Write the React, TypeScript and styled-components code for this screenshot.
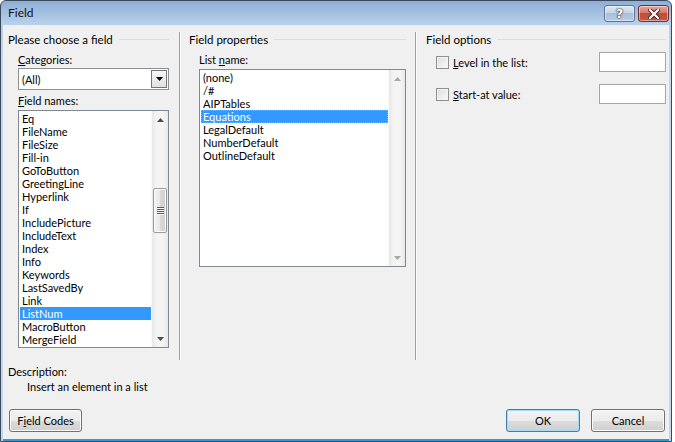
import React from "react";
import styled, { createGlobalStyle } from "styled-components";

const GlobalStyle = createGlobalStyle`
  html, body { margin: 0; padding: 0; background: #fff; }
  body {
    font-family: Lato, "Liberation Sans", sans-serif;
    font-size: 11px;
    color: #000;
  }
  * { box-sizing: border-box; }
`;

const Window = styled.div`
  width: 672px;
  height: 442px;
  display: flex;
  flex-direction: column;
  border: 1px solid #3a4a5c;
  border-radius: 6px 6px 0 0;
  background: linear-gradient(#8eaed6 0px, #b6cfea 22px, #c2d7ee 60px, #c2d7ee);
  overflow: hidden;
`;

const TitleBar = styled.div`
  height: 24px;
  display: flex;
  align-items: flex-start;
  justify-content: space-between;
  padding: 0 2px 0 7px;
`;

const Title = styled.div`
  line-height: 24px;
  font-size: 12px;
  color: #111;
`;

const CaptionButtons = styled.div`
  display: flex;
  gap: 3px;
  margin-top: 4px;
`;

const CaptionButton = styled.div<{ $close?: boolean }>`
  width: 31px;
  height: 17px;
  display: flex;
  align-items: center;
  justify-content: center;
  border: 1px solid ${(p) => (p.$close ? "#7a2f2c" : "#5d7592")};
  border-radius: 3px;
  background: ${(p) =>
    p.$close
      ? "linear-gradient(#e8a596 0%, #d7796a 45%, #c14d3c 50%, #c6573f 100%)"
      : "linear-gradient(#dde9f5 0%, #c5d6ea 45%, #a9bfda 50%, #b7cde6 100%)"};
  box-shadow: inset 0 0 0 1px rgba(255, 255, 255, 0.45);
  color: #fff;
  font-family: "DejaVu Sans", sans-serif;
  font-weight: bold;
  font-size: 13px;
  line-height: 1;
  text-shadow: 0 0 1px #24364f, 0 0 1px #24364f, 0 0 2px #24364f;
`;

const Body = styled.div`
  flex: 1;
  margin: 0 2px;
  background: #f0f0f0;
  display: flex;
  flex-direction: column;
  border-bottom: 2px solid #3998cf;
`;

const Columns = styled.div`
  display: flex;
  margin-top: 7px;
  height: 328px;
`;

const Column = styled.div<{ $w?: number; $pl: number; $pr: number; $sep?: boolean }>`
  ${(p) => (p.$w ? `width: ${p.$w}px;` : "flex: 1;")}
  padding: 0 ${(p) => p.$pr}px 0 ${(p) => p.$pl}px;
  ${(p) => (p.$sep ? "border-left: 1px solid #a0a0a0;" : "")}
  ${(p) => (p.$sep ? "box-shadow: inset 1px 0 0 #fbfbfb;" : "")}
  display: flex;
  flex-direction: column;
`;

const GroupHeader = styled.div`
  display: flex;
  align-items: center;
  line-height: 15px;
  height: 15px;
  font-size: 11.5px;
  &::after {
    content: "";
    flex: 1;
    height: 1px;
    margin-left: 6px;
    background: #d5dfe5;
  }
`;

const Indent = styled.div<{ $top: number }>`
  margin-left: 10px;
  margin-top: ${(p) => p.$top}px;
  display: flex;
  flex-direction: column;
`;

const Label = styled.div<{ $mt?: number }>`
  line-height: 15px;
  margin-top: ${(p) => p.$mt ?? 0}px;
  margin-bottom: 1px;
`;

const Combo = styled.div`
  height: 22px;
  border: 1px solid #8c8f94;
  background: #fff;
  display: flex;
  align-items: center;
  justify-content: space-between;
  padding: 1px 1px 1px 3px;
`;

const ComboButton = styled.div`
  width: 16px;
  height: 18px;
  border: 1px solid #777;
  background: linear-gradient(#f6f6f6, #e2e2e2);
  display: flex;
  align-items: center;
  justify-content: center;
`;

const ListBox = styled.div<{ $h: number }>`
  height: ${(p) => p.$h}px;
  margin-top: 1px;
  border: 1px solid #828790;
  background: #fff;
  display: flex;
  overflow: hidden;
`;

const Items = styled.div`
  flex: 1;
  padding: 1px 0 0 1px;
`;

const Item = styled.div<{ $sel?: boolean; $focus?: boolean }>`
  height: 13px;
  line-height: 13px;
  padding-left: 2px;
  white-space: nowrap;
  background: ${(p) => (p.$sel ? "#3399ff" : "transparent")};
  color: ${(p) => (p.$sel ? "#fff" : "#000")};
  ${(p) => (p.$focus ? "outline: 1px dotted #e0a040; outline-offset: -1px;" : "")}
`;

const ScrollBar = styled.div`
  width: 17px;
  display: flex;
  flex-direction: column;
  justify-content: space-between;
  background: linear-gradient(90deg, #e8e8e8, #f4f4f4 30%, #f4f4f4 70%, #e8e8e8);
  border-left: 1px solid #f8f8f8;
`;

const Arrow = styled.div`
  height: 17px;
  display: flex;
  align-items: center;
  justify-content: center;
`;

const Thumb = styled.div<{ $top: number }>`
  position: relative;
  margin: 0 1px;
  height: 45px;
  top: ${(p) => p.$top}px;
  border: 1px solid #9a9a9a;
  border-radius: 2px;
  background: linear-gradient(90deg, #f3f3f3, #e8e8e8 50%, #d9d9d9 51%, #cfcfcf);
  box-shadow: inset 0 0 0 1px #fafafa;
  display: flex;
  flex-direction: column;
  align-items: center;
  justify-content: center;
  gap: 1px;
`;

const Grip = styled.div`
  width: 7px;
  height: 1px;
  background: #5a5a5a;
  box-shadow: 0 1px 0 #f8f8f8;
`;

const Track = styled.div`
  flex: 1;
`;

const OptionRow = styled.div<{ $mt: number }>`
  display: flex;
  align-items: center;
  height: 20px;
  margin-top: ${(p) => p.$mt}px;
`;

const CheckBox = styled.div`
  width: 13px;
  height: 13px;
  border: 1px solid #8e8f8f;
  background: linear-gradient(135deg, #dcdcdc, #fbfbfb);
  box-shadow: inset 0 0 0 1px #f4f4f4;
  margin-right: 4px;
`;

const OptionText = styled.div`
  flex: 1;
`;

const TextBox = styled.div`
  width: 67px;
  height: 20px;
  border: 1px solid #a6a6a6;
  background: #fff;
`;

const Description = styled.div`
  margin-top: 4px;
  padding-left: 5px;
  line-height: 15px;
`;

const DescriptionText = styled.div`
  padding-left: 19px;
`;

const Footer = styled.div`
  display: flex;
  align-items: center;
  margin-top: 15px;
  padding: 0 4px 0 6px;
`;

const Button = styled.div<{ $default?: boolean; $w: number }>`
  width: ${(p) => p.$w}px;
  height: 23px;
  border: 1px solid ${(p) => (p.$default ? "#3c7fb1" : "#707070")};
  border-radius: 3px;
  background: linear-gradient(#f2f2f2 0%, #ebebeb 50%, #dddddd 51%, #cfcfcf 100%);
  box-shadow: inset 0 0 0 1px ${(p) => (p.$default ? "#9fdcf8" : "#fbfbfb")};
  display: flex;
  align-items: center;
  justify-content: center;
  & + & {
    margin-left: 11px;
  }
`;

const Spacer = styled.div`
  flex: 1;
`;

const U = styled.span`
  text-decoration: underline;
  text-underline-offset: 1px;
`;

const Tri = ({ up, color = "#4d4d4d" }: { up?: boolean; color?: string }) => (
  <svg width="7" height="4" viewBox="0 0 7 4">
    <path d={up ? "M3.5 0 L7 4 L0 4 Z" : "M0 0 L7 0 L3.5 4 Z"} fill={color} />
  </svg>
);

const fieldNames = [
  "Eq", "FileName", "FileSize", "Fill-in", "GoToButton", "GreetingLine", "Hyperlink", "If",
  "IncludePicture", "IncludeText", "Index", "Info", "Keywords", "LastSavedBy", "Link",
  "ListNum", "MacroButton", "MergeField",
];

const listNames = ["(none)", "/#", "AIPTables", "Equations", "LegalDefault", "NumberDefault", "OutlineDefault"];

export default function App() {
  return (
    <>
      <GlobalStyle />
      <Window>
        <TitleBar>
          <Title>Field</Title>
          <CaptionButtons>
            <CaptionButton>?</CaptionButton>
            <CaptionButton $close>
              <svg width="12" height="10" viewBox="0 0 12 10">
                <path d="M2 1 L10 9 M10 1 L2 9" stroke="#3b1b18" strokeWidth="4" strokeLinecap="square" />
                <path d="M2 1 L10 9 M10 1 L2 9" stroke="#fff" strokeWidth="2.2" strokeLinecap="square" />
              </svg>
            </CaptionButton>
          </CaptionButtons>
        </TitleBar>
        <Body>
          <Columns>
            <Column $w={176} $pl={5} $pr={10}>
              <GroupHeader>Please choose a field</GroupHeader>
              <Indent $top={5}>
                <Label><U>C</U>ategories:</Label>
                <Combo>
                  <span>(All)</span>
                  <ComboButton><Tri color="#000" /></ComboButton>
                </Combo>
                <Label $mt={3}><U>F</U>ield names:</Label>
                <ListBox $h={238}>
                  <Items>
                    {fieldNames.map((n) => (
                      <Item key={n} $sel={n === "ListNum"}>{n}</Item>
                    ))}
                  </Items>
                  <ScrollBar>
                    <Arrow><Tri up /></Arrow>
                    <Track>
                      <Thumb $top={60}>
                        <Grip /><Grip /><Grip /><Grip />
                      </Thumb>
                    </Track>
                    <Arrow><Tri /></Arrow>
                  </ScrollBar>
                </ListBox>
              </Indent>
            </Column>
            <Column $w={236} $pl={9} $pr={9} $sep>
              <GroupHeader>Field properties</GroupHeader>
              <Indent $top={5}>
                <Label>List <U>n</U>ame:</Label>
                <ListBox $h={198}>
                  <Items>
                    {listNames.map((n) => (
                      <Item key={n} $sel={n === "Equations"} $focus={n === "Equations"}>{n}</Item>
                    ))}
                  </Items>
                  <ScrollBar>
                    <Arrow><Tri up color="#a8a8a8" /></Arrow>
                    <Arrow><Tri color="#a8a8a8" /></Arrow>
                  </ScrollBar>
                </ListBox>
              </Indent>
            </Column>
            <Column $pl={10} $pr={3} $sep>
              <GroupHeader>Field options</GroupHeader>
              <Indent $top={0}>
                <OptionRow $mt={5}>
                  <CheckBox />
                  <OptionText><U>L</U>evel in the list:</OptionText>
                  <TextBox />
                </OptionRow>
                <OptionRow $mt={12}>
                  <CheckBox />
                  <OptionText><U>S</U>tart-at value:</OptionText>
                  <TextBox />
                </OptionRow>
              </Indent>
            </Column>
          </Columns>
          <Description>
            Description:
            <DescriptionText>Insert an element in a list</DescriptionText>
          </Description>
          <Footer>
            <Button $w={73}>F<U>i</U>eld Codes</Button>
            <Spacer />
            <Button $w={74} $default>OK</Button>
            <Button $w={74}>Cancel</Button>
          </Footer>
        </Body>
      </Window>
    </>
  );
}
